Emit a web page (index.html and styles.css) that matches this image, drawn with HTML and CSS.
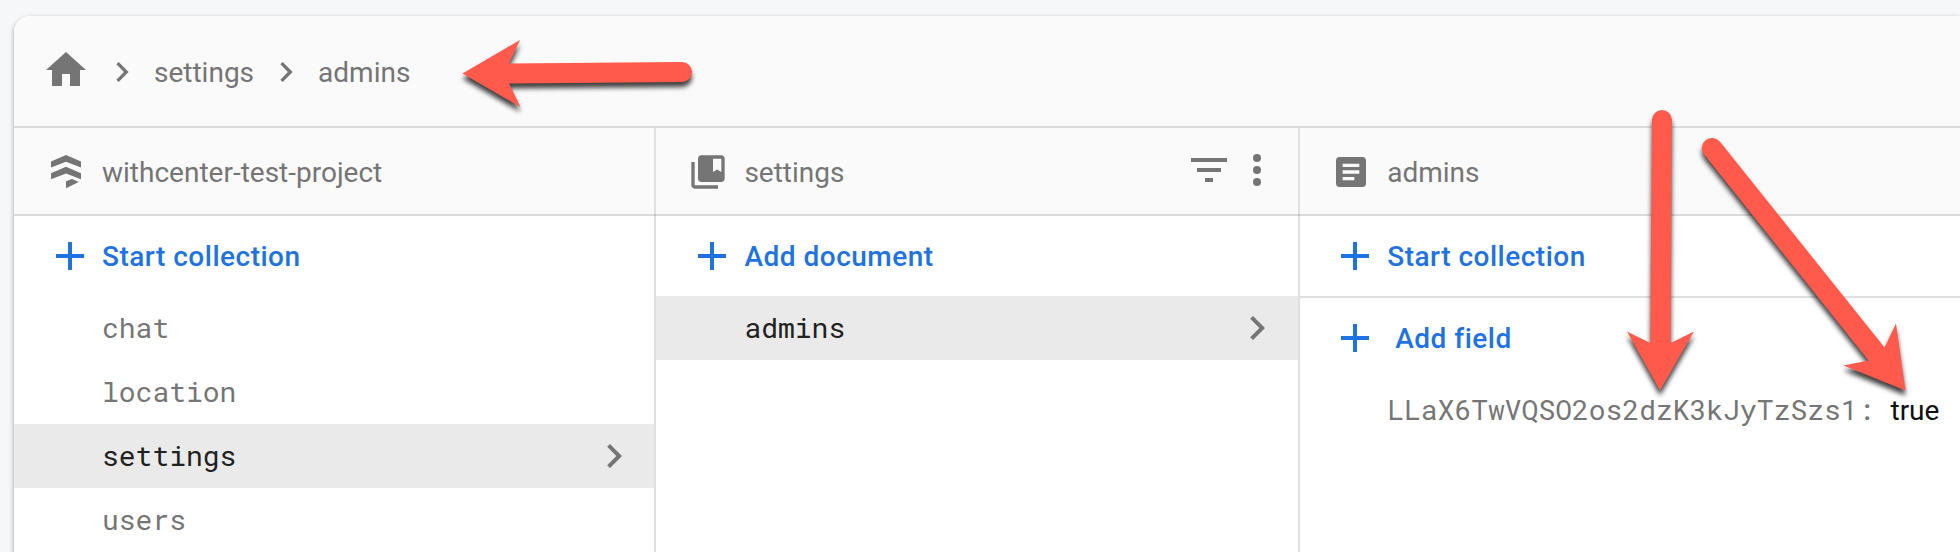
FILE: index.html
```html
<!DOCTYPE html>
<html lang="en">
<head>
<meta charset="utf-8">
<title>Firestore data</title>
<link rel="stylesheet" href="styles.css">
</head>
<body>
<svg class="defs" width="0" height="0">
  <symbol id="chevron" viewBox="0 0 24 24"><path d="M10 6 8.59 7.41 13.17 12l-4.58 4.59L10 18l6-6z"/></symbol>
  <symbol id="plus" viewBox="0 0 24 24"><path d="M19 13h-6v6h-2v-6H5v-2h6V5h2v6h6v2z"/></symbol>
</svg>
<main class="panel">
  <nav class="crumbs">
    <svg class="icon home" viewBox="0 0 24 24"><path d="M10 20v-6h4v6h5v-8h3L12 3 2 12h3v8z"/></svg>
    <svg class="icon sep"><use href="#chevron"/></svg>
    <span class="crumb">settings</span>
    <svg class="icon sep"><use href="#chevron"/></svg>
    <span class="crumb">admins</span>
  </nav>
  <div class="columns">
    <section class="column">
      <header class="head">
        <svg class="icon kind" viewBox="0 0 40 40"><path d="M5 9.400 20 3l15 6.400v6L20 9.700 5 15.400zM5 21.300l15-6.600 15 6.600v6L20 21.500 5 27.300zM20 29.300l6-2.300 6.700 3L20 36.200z"/></svg>
        <span>withcenter-test-project</span>
      </header>
      <div class="action"><svg class="icon"><use href="#plus"/></svg><span>Start collection</span></div>
      <div class="item"><span>chat</span></div>
      <div class="item"><span>location</span></div>
      <div class="item selected"><span>settings</span><svg class="icon"><use href="#chevron"/></svg></div>
      <div class="item"><span>users</span></div>
    </section>
    <section class="column documents">
      <header class="head">
        <svg class="icon kind" viewBox="0 0 24 24"><path d="M4 6H2v14c0 1.1.9 2 2 2h14v-2H4V6z"/><path d="M20 2H8c-1.1 0-2 .9-2 2v12c0 1.1.9 2 2 2h12c1.1 0 2-.9 2-2V4c0-1.1-.9-2-2-2zm0 10-2.500-1.500L15 12V4h5v8z"/></svg>
        <span>settings</span>
        <span class="tools">
          <svg class="icon" viewBox="0 0 24 24"><path d="M10 18h4v-2h-4v2zM3 6v2h18V6H3zm3 7h12v-2H6v2z"/></svg>
          <svg class="icon" viewBox="0 0 24 24"><circle cx="12" cy="6" r="2"/><circle cx="12" cy="12" r="2"/><circle cx="12" cy="18" r="2"/></svg>
        </span>
      </header>
      <div class="action"><svg class="icon"><use href="#plus"/></svg><span>Add document</span></div>
      <div class="item selected"><span>admins</span><svg class="icon"><use href="#chevron"/></svg></div>
    </section>
    <section class="column fields">
      <header class="head">
        <svg class="icon kind" viewBox="0 0 24 24"><path d="M19 3H5c-1.1 0-2 .9-2 2v14c0 1.1.9 2 2 2h14c1.1 0 2-.9 2-2V5c0-1.1-.9-2-2-2zm-5 14H7v-2h7v2zm3-4H7v-2h10v2zm0-4H7V7h10v2z"/></svg>
        <span>admins</span>
      </header>
      <div class="action ruled"><svg class="icon"><use href="#plus"/></svg><span>Start collection</span></div>
      <div class="action field-action"><svg class="icon"><use href="#plus"/></svg><span>Add field</span></div>
      <div class="field"><span class="key">LLaX6TwVQSO2os2dzK3kJyTzSzs1:</span><span class="value">true</span></div>
    </section>
  </div>
</main>
<svg class="arrows" viewBox="0 0 1960 552">
  <path d="M462.5 73.5 520 40 509 63.6 682 62a10 10 0 0 1 0 20L509 83.600 520.500 107z"/>
  <path d="M1660 390.500 1627 331.500 1650.300 343 1652 120a10 10 0 0 1 20 0L1670.700 343 1694 331.500z"/>
  <path d="M1905.500 390.500 1843.500 365.500 1868.500 360.500 1704 154.200A10 10 0 0 1 1720 141.800L1884.600 347.500 1896 323.500z"/>
</svg>
</body>
</html>
```
FILE: styles.css
```css
* { box-sizing: border-box; }

body {
  margin: 0;
  height: 552px;
  overflow: hidden;
  padding: 16px 0 0 14px;
  background: #f5f7f9;
  color: #757575;
  font: 28px/36px Roboto, sans-serif;
}

.defs { display: none; }

.icon {
  display: block;
  flex: none;
  width: 48px;
  height: 48px;
  fill: #757575;
}

.panel {
  height: 560px;
  background: #fff;
  border-radius: 16px 0 0 0;
  box-shadow: 0 2px 5px rgba(0, 0, 0, .36);
}

.crumbs {
  display: flex;
  align-items: center;
  height: 112px;
  padding: 0 0 0 28px;
  border-bottom: 2px solid #dbdbdb;
  border-radius: 16px 0 0 0;
  background: #fafafa;
}
.home { margin: 0 12px 2px 0; }
.sep { width: 40px; height: 40px; margin: 1px 12px 0 0; }
.crumb { margin: 4px 12px 0 0; }

.columns {
  display: grid;
  grid-template-columns: 642px 644px 1fr;
  height: 424px;
}
.column { --inset: 32px; border-right: 2px solid #e0e0e0; white-space: nowrap; }
.documents { --inset: 32.4px; }
.fields { --inset: 31.2px; border-right: 0; }

.head {
  position: relative;
  display: flex;
  align-items: center;
  height: 88px;
  padding-left: var(--inset);
  border-bottom: 2px solid #dbdbdb;
  background: #fafafa;
}
/* darker spot where the column rule crosses the header rule */
.head::after {
  content: "";
  position: absolute;
  right: -2px;
  bottom: -2px;
  width: 2px;
  height: 2px;
  background: #c4c4c4;
}
.fields .head::after { display: none; }
.kind { width: 40px; height: 40px; margin: 2px 16px 0 0; }
.head > span { margin-top: 3px; }
.head > .tools { display: flex; margin: 0 17px 2px auto; }

.action {
  display: flex;
  align-items: center;
  gap: 8px;
  height: 80px;
  padding-left: var(--inset);
  color: #1f72e3;
  font-weight: 500;
  letter-spacing: .5px;
}
.action .icon { fill: #1f72e3; }
.action span { margin-top: 2px; }
.ruled { height: 82px; border-bottom: 2px solid #e0e0e0; }
.field-action { gap: 16px; }

.item {
  display: flex;
  align-items: center;
  justify-content: space-between;
  height: 64px;
  padding: 0 16px 0 calc(var(--inset) + 56px);
}
.documents .item { padding-right: 17px; }
.selected { background: #eaeaea; color: #212121; }
.item span, .key { font: 28px/36px "Roboto Mono", "DejaVu Sans Mono", monospace; }

.field { display: flex; align-items: center; height: 64px; padding-left: calc(var(--inset) + 56px); }
.value { margin: 2px 0 0 16px; color: #111; }

.arrows {
  position: absolute;
  left: 0;
  top: 0;
  width: 1960px;
  height: 552px;
  fill: #ff5a4c;
  filter: drop-shadow(0 5px 2.500px rgba(0, 0, 0, .75));
}
```
